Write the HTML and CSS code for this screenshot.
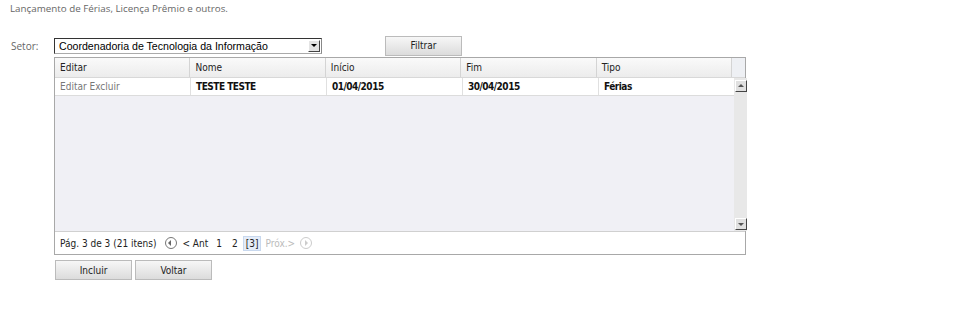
FILE: index.html
```html
<!DOCTYPE html>
<html lang="pt-BR">
<head>
    <meta charset="utf-8">
    <title>Lançamento de Férias</title>
    <link rel="stylesheet" href="styles.css">
</head>
<body>
    <p class="page-title">Lançamento de Férias, Licença Prêmio e outros.</p>

    <div class="filter-row">
        <span class="filter-label">Setor:</span>
        <div class="select">
            <span class="select-text">Coordenadoria de Tecnologia da Informação</span>
            <span class="select-arrow"></span>
        </div>
        <button type="button" class="btn btn-filter">Filtrar</button>
    </div>

    <div class="grid">
        <div class="grid-head">
            <div class="cell">Editar</div>
            <div class="cell">Nome</div>
            <div class="cell">Início</div>
            <div class="cell">Fim</div>
            <div class="cell">Tipo</div>
            <div class="head-pad"></div>
        </div>
        <div class="grid-body">
            <div class="rows">
                <div class="grid-row">
                    <div class="cell link">Editar Excluir</div>
                    <div class="cell strong">TESTE TESTE</div>
                    <div class="cell strong">01/04/2015</div>
                    <div class="cell strong">30/04/2015</div>
                    <div class="cell strong">Férias</div>
                </div>
            </div>
            <div class="scrollbar">
                <span class="sb-btn sb-up"></span>
                <span class="sb-track"></span>
                <span class="sb-btn sb-down"></span>
            </div>
        </div>
        <div class="pager">
            <span class="pager-info">Pág. 3 de 3 (21 itens)</span>
            <span class="pager-icon"><span class="tri-left"></span></span>
            <span class="pager-link">&lt; Ant</span>
            <span class="pager-num">1</span>
            <span class="pager-num">2</span>
            <span class="pager-num current">[3]</span>
            <span class="pager-link disabled">Próx.&gt;</span>
            <span class="pager-icon disabled"><span class="tri-right"></span></span>
        </div>
    </div>

    <div class="actions">
        <button type="button" class="btn">Incluir</button>
        <button type="button" class="btn">Voltar</button>
    </div>
</body>
</html>
```

FILE: styles.css
```css
body {
    margin: 0;
    padding: 0 0 0 10px;
    background: #fff;
    font-family: "DejaVu Sans", Verdana, sans-serif;
    font-stretch: condensed;
    font-size: 10px;
    color: #222;
}

.page-title {
    margin: 0;
    padding-top: 2px;
    height: 20px;
    font-family: "Open Sans", "Noto Sans", sans-serif;
    font-stretch: normal;
    font-size: 9.8px;
    color: #666;
}

.filter-row {
    display: flex;
    align-items: center;
    height: 19px;
    margin-top: 14px;
}

.filter-label {
    width: 43px;
    padding-left: 1px;
    font-family: "Open Sans", "Noto Sans", sans-serif;
    font-stretch: normal;
    font-size: 10px;
    color: #666;
}

.select {
    display: flex;
    align-items: center;
    width: 266px;
    height: 14px;
    border: 1px solid #333;
    border-right-color: #888;
    border-bottom-color: #aaa;
    font-family: "Liberation Sans", Arial, sans-serif;
    font-stretch: normal;
    font-size: 10.6px;
    color: #000;
}

.select-text {
    flex: 1;
    padding-left: 4px;
    white-space: nowrap;
}

.select-arrow {
    position: relative;
    width: 10px;
    height: 10px;
    margin-right: 1px;
    background: #e4e4e4;
    border: 1px solid #fff;
    border-right-color: #444;
    border-bottom-color: #444;
}

.select-arrow::after {
    content: "";
    position: absolute;
    left: 2px;
    top: 3px;
    border-left: 3px solid transparent;
    border-right: 3px solid transparent;
    border-top: 3px solid #000;
}

.btn {
    width: 77px;
    height: 20px;
    padding: 0;
    border: 1px solid #bbb;
    background: linear-gradient(#f7f7f7, #dcdcdc);
    font-family: "DejaVu Sans", Verdana, sans-serif;
    font-stretch: condensed;
    font-size: 10px;
    color: #222;
}

.btn-filter {
    margin-left: 63px;
}

.grid {
    width: 690px;
    margin-left: 44px;
    margin-top: 2px;
    border: 1px solid #a8a8a8;
}

.grid-head,
.grid-row {
    display: flex;
}

.grid-head {
    height: 19px;
    background: linear-gradient(#fafafa, #ececec);
    border-bottom: 1px solid #d8d8d8;
}

.grid-head .cell {
    border-right: 1px solid #d4d4d4;
}

.cell {
    width: 130px;
    padding-left: 5px;
    line-height: 19px;
    white-space: nowrap;
}

.head-pad {
    width: 13px;
    background: #eef0f4;
}

.grid-body {
    display: flex;
    height: 153px;
    background: #f0f0f5;
}

.rows {
    flex: 1;
}

.grid-row {
    height: 17px;
    background: #fff;
    border-bottom: 1px solid #dcdcdc;
}

.grid-row .cell {
    line-height: 17px;
    border-right: 1px solid #e0e0e0;
}

.grid-row .cell:last-child {
    border-right: 0;
}

.link {
    color: #777;
}

.strong {
    font-weight: bold;
    letter-spacing: -0.5px;
    color: #111;
}

.scrollbar {
    display: flex;
    flex-direction: column;
    width: 13px;
    background: #e8e8e8;
}

.sb-btn {
    position: relative;
    height: 10px;
    margin: 2px 0 0 1px;
    width: 10px;
    background: #e0e0e0;
    border: 1px solid #fff;
    border-right-color: #444;
    border-bottom-color: #444;
}

.sb-down {
    margin: 0 0 1px 1px;
}

.sb-track {
    flex: 1;
}

.sb-up::after,
.sb-down::after {
    content: "";
    position: absolute;
    left: 2px;
    border-left: 3px solid transparent;
    border-right: 3px solid transparent;
}

.sb-up::after {
    top: 3px;
    border-bottom: 3px solid #555;
}

.sb-down::after {
    top: 4px;
    border-top: 3px solid #555;
}

.pager {
    display: flex;
    align-items: center;
    height: 22px;
    padding-left: 5px;
    border-top: 1px solid #d0d0d0;
    background: #fff;
}

.pager-info {
    margin-right: 9px;
}

.pager-icon {
    position: relative;
    width: 10px;
    height: 10px;
    border: 1px solid #777;
    border-radius: 50%;
    margin-right: 5px;
}

.pager-icon.disabled {
    border-color: #ccc;
    margin-left: 5px;
}

.tri-left,
.tri-right {
    position: absolute;
    top: 2px;
    border-top: 3px solid transparent;
    border-bottom: 3px solid transparent;
}

.tri-left {
    left: 2px;
    border-right: 3px solid #666;
}

.tri-right {
    left: 4px;
    border-left: 3px solid #ccc;
}

.pager-link {
    margin-right: 3px;
}

.pager-num {
    padding: 2px 3px;
    margin-left: 2px;
    margin-right: 2px;
}

.pager-num.current {
    background: #e4ecf8;
    border: 1px solid #c8d8ee;
    padding: 1px 2px;
    margin-left: 0;
}

.pager-link.disabled {
    margin-left: 2px;
    margin-right: 0;
}

.disabled {
    color: #bbb;
}

.actions {
    display: flex;
    gap: 3px;
    margin: 5px 0 0 45px;
}
```
